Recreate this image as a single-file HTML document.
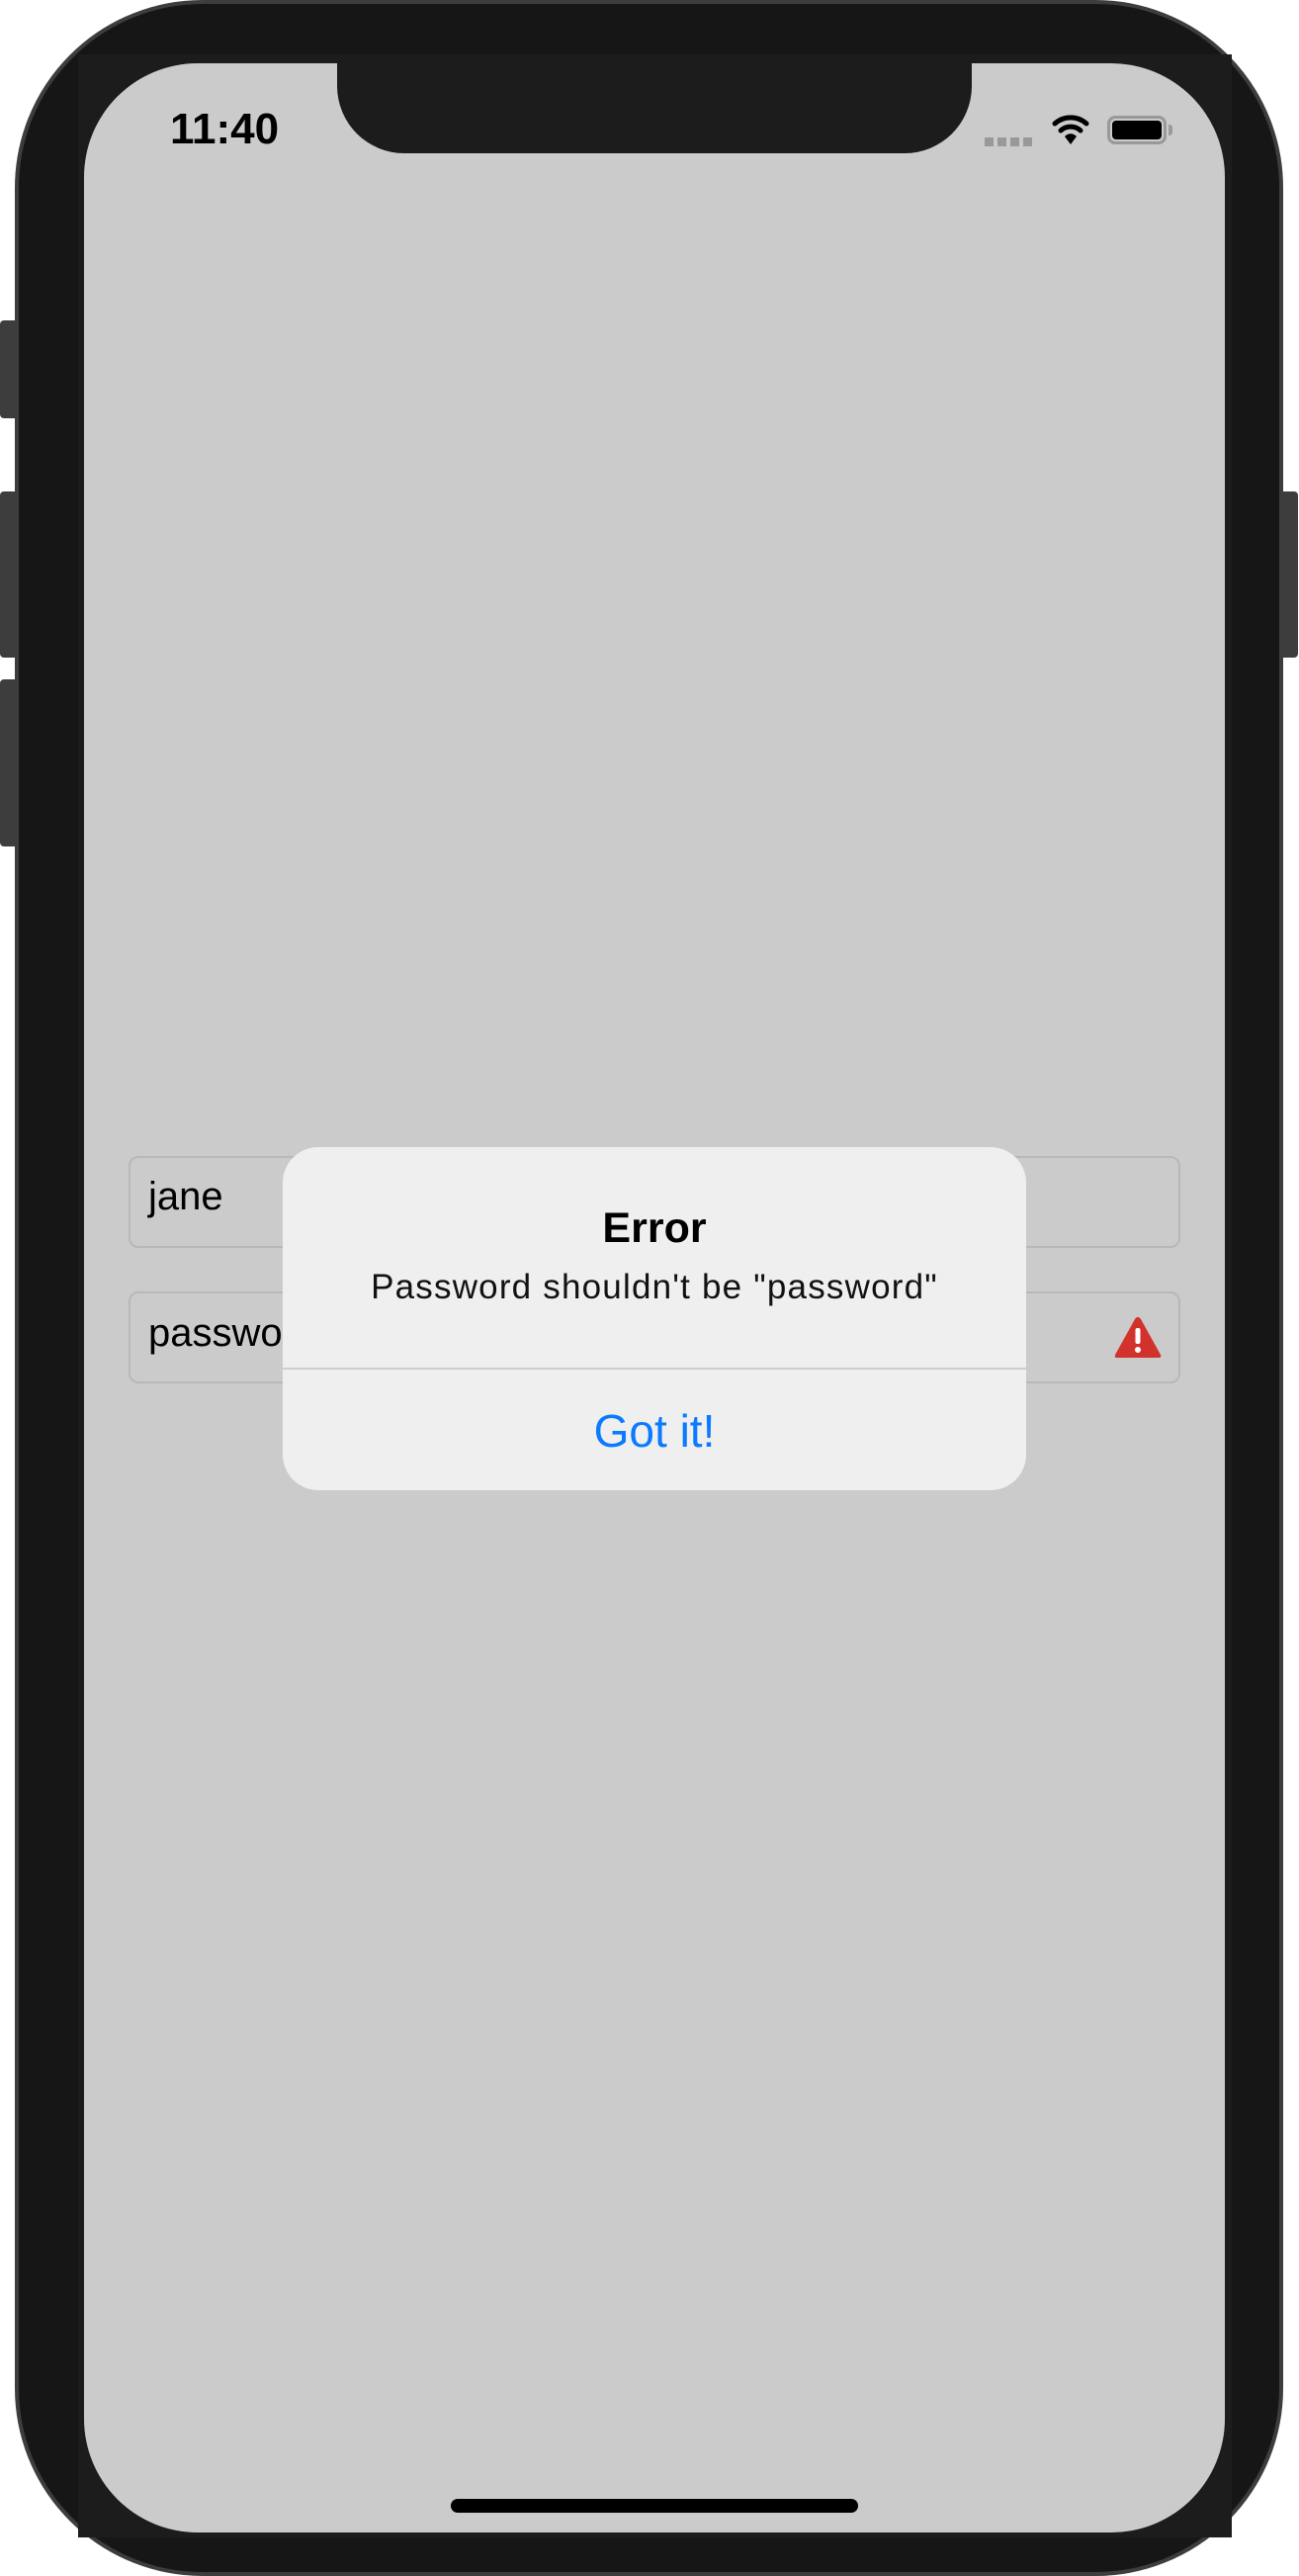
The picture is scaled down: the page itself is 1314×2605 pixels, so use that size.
<!DOCTYPE html>
<html><head><style>
*{margin:0;padding:0;box-sizing:border-box}
body{width:1314px;height:2595px;background:#fff;position:relative;overflow:hidden;font-family:"Liberation Sans",sans-serif}
.abs{position:absolute}
</style></head><body>
<div class="abs" style="left:0;top:324px;width:20px;height:99px;background:#3d3d3d;border-radius:4px"></div>
<div class="abs" style="left:0;top:497px;width:20px;height:168px;background:#3d3d3d;border-radius:4px"></div>
<div class="abs" style="left:0;top:687px;width:20px;height:169px;background:#3d3d3d;border-radius:4px"></div>
<div class="abs" style="left:1292px;top:497px;width:21px;height:168px;background:#3d3d3d;border-radius:4px"></div>
<div class="abs" style="left:15px;top:0;width:1283px;height:2605px;background:#161616;border:4px solid #3d3d3d;border-radius:190px"></div>
<div class="abs" style="left:79px;top:55px;width:1167px;height:2511px;background:#1c1c1c"></div>
<div class="abs" style="left:85px;top:64px;width:1154px;height:2497px;background:#cbcbcb;border-radius:115px"></div>
<div class="abs" style="left:341px;top:55px;width:642px;height:100px;background:#1c1c1c;border-radius:0 0 68px 68px"></div>
<div class="abs" style="left:172px;top:106px;font-size:44px;font-weight:bold;color:#000">11:40</div>
<div class="abs" style="left:996px;top:139px;width:49px;height:9px;background:repeating-linear-gradient(90deg,#999 0 9px,transparent 9px 13px)"></div>
<svg class="abs" style="left:1063px;top:112px" width="40" height="36" viewBox="0 0 40 36"><g fill="none" stroke="#000" stroke-width="5" stroke-linecap="round"><path d="M4 13 A24 24 0 0 1 36 13"/><path d="M10 20 A15 15 0 0 1 30 20"/></g><path d="M20 34 L14 26 A8 8 0 0 1 26 26 Z" fill="#000"/></svg>
<div class="abs" style="left:1120px;top:117px;width:60px;height:29px;border:3px solid #999;border-radius:8px;padding:2px"><div style="width:100%;height:100%;background:#000;border-radius:4px"></div></div>
<div class="abs" style="left:1182px;top:126px;width:4px;height:11px;background:#999;border-radius:0 3px 3px 0"></div>
<div class="abs" style="left:130px;top:1169px;width:1064px;height:93px;border:2px solid #b8b8b8;border-radius:10px"></div>
<div class="abs" style="left:150px;top:1188px;font-size:40px;color:#000">jane</div>
<div class="abs" style="left:130px;top:1306px;width:1064px;height:93px;border:2px solid #b8b8b8;border-radius:10px"></div>
<div class="abs" style="left:150px;top:1326px;font-size:40px;color:#000">password</div>
<svg class="abs" style="left:1126px;top:1330px" width="50" height="45" viewBox="0 0 50 45"><path d="M25 2 Q27 2 28 4 L48 40 Q49 43 46 43 L4 43 Q1 43 2 40 L22 4 Q23 2 25 2Z" fill="#d2322c"/><rect x="22.5" y="13" width="5" height="16" rx="2" fill="#fff"/><circle cx="25" cy="35" r="3" fill="#fff"/></svg>
<div class="abs" style="left:286px;top:1160px;width:752px;height:347px;background:#efefef;border-radius:36px;overflow:hidden">
<div style="position:absolute;top:58px;width:100%;text-align:center;font-size:43px;font-weight:bold;color:#000">Error</div>
<div style="position:absolute;top:122px;width:100%;text-align:center;font-size:35px;letter-spacing:1.2px;color:#111">Password shouldn't be "password"</div>
<div style="position:absolute;top:223px;width:100%;height:2px;background:#cfcfcf"></div>
<div style="position:absolute;top:260px;width:100%;text-align:center;font-size:46px;color:#0a7aff">Got it!</div>
</div>
<div class="abs" style="left:456px;top:2527px;width:412px;height:14px;background:#000;border-radius:7px"></div>
</body></html>
